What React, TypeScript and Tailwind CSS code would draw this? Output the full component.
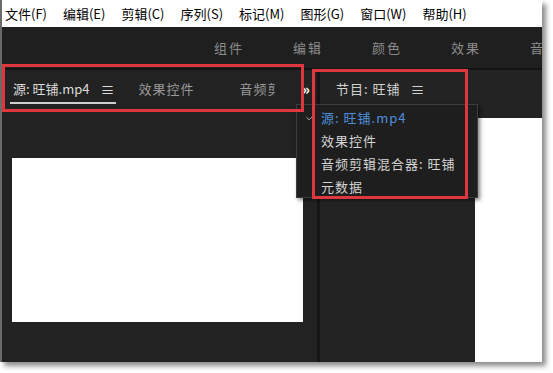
import React from 'react';
import { Check } from 'lucide-react';

const menus = ['文件(F)', '编辑(E)', '剪辑(C)', '序列(S)', '标记(M)', '图形(G)', '窗口(W)', '帮助(H)'];
const workspaces = ['组件', '编辑', '颜色', '效果', '音频'];
const panelItems = ['效果控件', '音频剪辑混合器: 旺铺', '元数据'];

const font = { fontFamily: '"Noto Sans CJK SC", "Noto Sans", sans-serif' };

export default function App() {
  return (
    <div className="w-[553px] h-[373px] bg-white overflow-hidden" style={font}>
      <div className="relative w-[542px] h-[362px] flex flex-col border-l-2 border-[#6a6a6a] bg-[#222222] shadow-[4px_4px_5px_rgba(0,0,0,0.45)]">
        {/* menu bar */}
        <div className="h-[27px] bg-white flex items-center gap-4 pl-[3px] text-[13px] text-black leading-none">
          {menus.map(m => (
            <span key={m}>{m}</span>
          ))}
        </div>

        {/* workspace bar */}
        <div className="h-[43px] bg-[#1f1f1f] border-b-2 border-[#141414] flex items-center pl-[212px] gap-[49px] text-[13px] tracking-[2px] text-[#8c8c8c] overflow-hidden whitespace-nowrap">
          {workspaces.map(w => (
            <span key={w}>{w}</span>
          ))}
        </div>

        <div className="flex-1 flex">
          {/* source panel */}
          <div className="w-[315px] flex flex-col bg-[#222222]">
            <div className="h-[40px] flex items-start pt-[9px] text-[13px] whitespace-nowrap">
              <div className="ml-[8px] flex flex-col">
                <div className="h-[20px] flex items-center pl-[3px] pr-[2px] text-[#dcdcdc]">
                  <span>源: 旺铺.mp4</span>
                  <span className="ml-[11px] text-[14px]">≡</span>
                </div>
                <div className="mt-[3px] h-[2px] bg-[#cfcfcf]" />
              </div>
              <span className="ml-[22px] h-[20px] flex items-center tracking-[1px] text-[#9a9a9a]">效果控件</span>
              <div className="ml-[45px] w-[36px] h-[20px] overflow-hidden flex items-center">
                <span className="tracking-[1px] text-[#9a9a9a]">音频剪</span>
              </div>
              <span className="ml-auto mr-[7px] h-[20px] flex items-center text-[15px] font-bold text-white">»</span>
            </div>
            <div className="flex-1 pt-[48px] pl-[10px]">
              <div className="w-[291px] h-[164px] bg-white" />
            </div>
          </div>

          <div className="w-[3px] bg-[#151515]" />

          {/* program panel */}
          <div className="flex-1 flex flex-col bg-[#232323]">
            <div className="h-[40px] flex items-start pt-[9px] pl-[16px] text-[13px] text-[#d2d2d2] whitespace-nowrap">
              <div className="h-[20px] flex items-center">
                <span className="tracking-[1px]">节目: 旺铺</span>
                <span className="ml-[10px] text-[14px]">≡</span>
              </div>
            </div>
            <div className="flex-1 flex">
              <div className="flex-1" />
              <div className="w-[67px] flex flex-col">
                <div className="h-[8px]" />
                <div className="flex-1 bg-white" />
              </div>
            </div>
          </div>
        </div>

        {/* panel dropdown */}
        <div className="absolute left-[294px] top-[104px] w-[182px] h-[94px] bg-[#1e1e1e] border border-[#3c3c3c] pt-[1px] text-[13px] tracking-[1px] whitespace-nowrap shadow-[2px_2px_4px_rgba(0,0,0,0.5)]">
          <div className="h-[23px] flex items-center text-[#4d8fdc]">
            <Check size={11} strokeWidth={2} className="ml-[8px] mr-[5px] text-[#bdbdbd]" />
            <span>源: 旺铺.mp4</span>
          </div>
          {panelItems.map(p => (
            <div key={p} className="h-[23px] flex items-center pl-[24px] text-[#d4d4d4]">
              {p}
            </div>
          ))}
        </div>

        {/* annotation boxes */}
        <div className="absolute left-0 top-[64px] w-[302px] h-[48px] border-[3px] border-[#e0363e]" />
        <div className="absolute left-[310px] top-[69px] w-[156px] h-[130px] border-[3px] border-[#e0363e]" />
      </div>
    </div>
  );
}
